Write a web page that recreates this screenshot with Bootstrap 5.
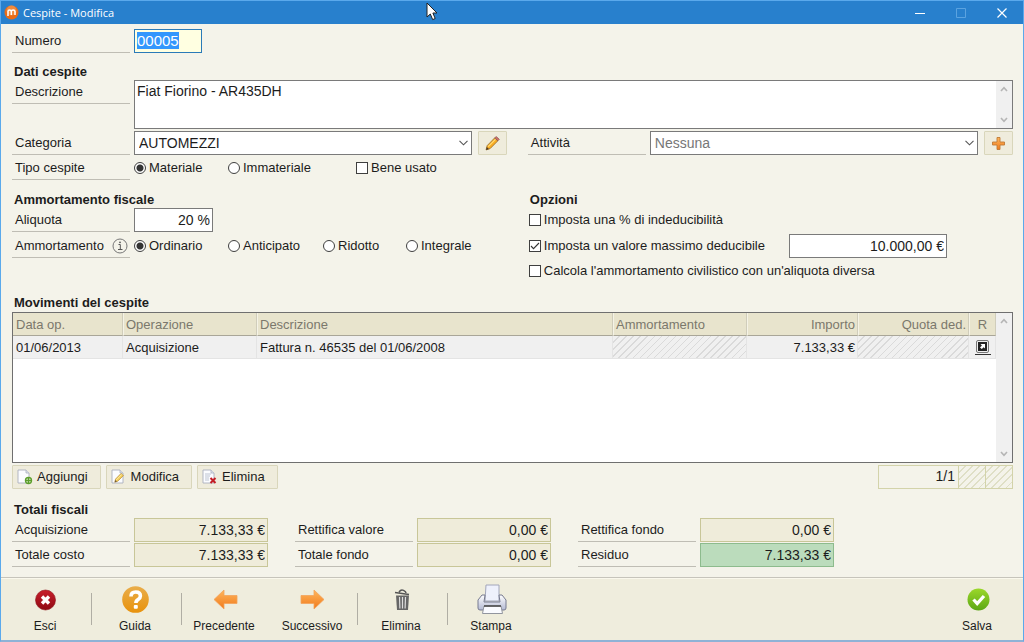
<!DOCTYPE html>
<html lang="it">
<head>
<meta charset="utf-8">
<meta name="viewport" content="width=device-width, initial-scale=1">
<title>Cespite - Modifica</title>
<link rel="stylesheet" href="https://cdn.jsdelivr.net/npm/bootstrap@5.3.0/dist/css/bootstrap.min.css">
<style>
body{font:13px/16px "Liberation Sans",Arial,sans-serif;color:#1c1c1c;background:#f4f3ea}
.window{min-height:100vh;border:1px solid #5aa9ec;border-bottom:2px solid #8fb2d6}
.titlebar{height:23px;background:#2880cd;color:#fff;font:11px/23px "Open Sans","Noto Sans",sans-serif;padding:0 1px 0 3px}
.titlebar button{width:41px;height:23px;border:0;padding:0;background:none;display:flex;align-items:center;justify-content:center}
.pointer{position:absolute;left:42%;top:1px;margin-left:-4px}
.content{padding:5px 10px 10px 11px}
h2{font-size:13px;line-height:16px;font-weight:700;margin:0;padding-left:2px}
h2.sec-tight{margin-top:11px}
.sec{margin-top:12px}
h2.sec-wide{margin-top:13px}
.gap-one{margin-top:1px}
.gap-two{margin-top:2px}
.pair{display:grid;grid-template-columns:102fr 100fr;column-gap:21px}
.line{display:flex;align-items:center;min-height:24px}
.cap{width:118px;height:24px;flex:none;margin-right:4px;padding:4px 2px 0 3px;border-bottom:1px solid #bfbdb4;line-height:16px;display:flex;justify-content:space-between}
.field.form-control,.field.form-select{height:24px;min-height:24px;border:1px solid #7a7a7a;border-radius:0;background-color:#fff;color:#1c1c1c;font-size:14px;line-height:20px;padding:0 2px 1px;box-shadow:none}
.field.form-select{padding:0 24px 1px 4px;background-image:url("data:image/svg+xml,%3Csvg xmlns='http://www.w3.org/2000/svg' viewBox='0 0 9 6'%3E%3Cpath d='M.5.8l4 4 4-4' fill='none' stroke='%23555' stroke-width='1.1'/%3E%3C/svg%3E");background-size:9px 6px;background-position:right 3px center}
.field.form-select.muted-choice{color:#777}
.field.number.form-control{width:68px;background-color:#ffffe1;border-color:#2a7ab8;font-size:15px}
.number::selection{background:#3297fd;color:#fff}
.w-rate{width:79px!important}.w-limit{width:158px!important}
.money{text-align:right}
.memo{height:49px;border:1px solid #7a7a7a;background:#fff}
.memo textarea{border:0;outline:0;resize:none;overflow:hidden;font-size:14px;line-height:16px;padding:2px;background:none;color:inherit}
.scroller{width:16px;flex:none;background:#f0f0f0;display:flex;flex-direction:column;justify-content:space-between;align-items:center;padding:5px 0 5px}
.tool{height:24px;border:1px solid #d9d6bb;background:#efecdc;border-radius:1px;padding:0 12px 0 4px;color:#1c1c1c;display:flex;align-items:center;gap:4px;font-size:13px;line-height:16px}
.tool.square{width:29px;flex:none;justify-content:center;margin-left:6px;padding:0}
.toolrow{gap:5px}
.tick{display:flex;align-items:center;height:24px;white-space:nowrap}
.tick .form-check-input{width:12px;height:12px;margin:0 3px 0 0;border:1px solid #3f3f3f;background-color:#fff;flex:none;box-shadow:none}
.tick .form-check-input[type=checkbox]{border-radius:0}
.tick .form-check-input:checked[type=radio]{background-image:radial-gradient(circle,#333 0 3px,transparent 4px)}
.tick .form-check-input:checked[type=checkbox]{background-image:url("data:image/svg+xml,%3Csvg xmlns='http://www.w3.org/2000/svg' viewBox='0 0 10 10'%3E%3Cpath d='M1 5l2.5 2.6L9 2' fill='none' stroke='%23333' stroke-width='1.1'/%3E%3C/svg%3E");background-size:10px}
.options{padding-left:1px}
.options h2{padding-left:1px}
.r1{width:94px}.r2{width:95px}.r3{width:83px}.r4{width:128px}
.hatch{background:repeating-linear-gradient(135deg,transparent 0 4px,#dadada 4px 5px)}
.grid-box{border:1px solid #6f6f6f;background:#fff;min-height:151px}
.moves{width:100%;table-layout:fixed;border-collapse:separate;border-spacing:0}
.moves th{height:23px;background:#e8e4cd;color:#7b786c;font-weight:400;padding:1px 2px 0;border-right:1px solid #d0cdbb;border-bottom:1px solid #a9a698;border-left:1px solid #f5f3e6}
.moves td{height:23px;padding:1px 2px 0 3px;background-color:#f0f0f0;border-right:1px solid #e4e4e4;border-bottom:1px solid #e4e4e4}
.moves th:first-child{border-left:0;padding-left:3px}
.open-link{display:block;width:16px;border-bottom:1px solid #333;padding-bottom:1px;margin:auto;text-align:center;line-height:0}
.pager{border:1px solid #d3d3aa;height:24px;font-size:14px}
.pager .count{width:79px;text-align:right;padding:2px 3px}
.pager .hatch{width:27px;border-left:1px solid #d3d3aa;background:repeating-linear-gradient(135deg,transparent 0 4px,#dfdfc6 4px 5px)}
.totals{display:grid;grid-template-columns:repeat(3,256px);column-gap:27px;row-gap:1px}
.totals .field.form-control{background-color:#efecda;border-color:#c8c698;width:134px}
.totals .field.form-control.result{background-color:#bbdcbc;border-color:#8dbb8d}
.actions{min-height:63px;border-top:1px solid #c6c4bb;background:#efeddd;box-shadow:inset 0 1px #faf8ec}
.action{width:90px;height:62px;padding:6px 2px 0 0;border:0;background:none;color:#1c1c1c;font-size:12px;line-height:16px;display:flex;flex-direction:column;align-items:center;gap:2px}
.action svg{height:32px}
.near{width:88px}
.bar{width:1px;height:32px;margin-top:15px;background:#b0aea4;margin-right:-1px}
</style>
</head>
<body>
<svg width="0" height="0" class="position-absolute" aria-hidden="true">
<defs>
<linearGradient id="orange" x1="0" y1="0" x2="0" y2="1"><stop offset="0" stop-color="#ffb65c"/><stop offset="1" stop-color="#f07a1c"/></linearGradient>
<linearGradient id="amber" x1="0" y1="0" x2="0" y2="1"><stop offset="0" stop-color="#e9ad4a"/><stop offset="1" stop-color="#e8920c"/></linearGradient>
<linearGradient id="green" x1="0" y1="0" x2="0" y2="1"><stop offset="0" stop-color="#9bd82a"/><stop offset="1" stop-color="#5ca716"/></linearGradient>
<linearGradient id="red" x1="0" y1="0" x2="0" y2="1"><stop offset="0" stop-color="#c81f2b"/><stop offset="1" stop-color="#8f0a14"/></linearGradient>
<linearGradient id="steel" x1="0" y1="0" x2="0" y2="1"><stop offset="0" stop-color="#fff"/><stop offset="1" stop-color="#b3b9d3"/></linearGradient>
<symbol id="up" viewBox="0 0 8 6"><path d="M1 5l3-3.4L7 5" fill="none" stroke="#b5b5b5" stroke-width="1.6"/></symbol>
<symbol id="down" viewBox="0 0 8 6"><path d="M1 1l3 3.4L7 1" fill="none" stroke="#b5b5b5" stroke-width="1.6"/></symbol>
<symbol id="pencil" viewBox="0 0 14 14"><path d="M1 13l1-4 7-7.2 3 2.700-7.300 7.300z" fill="#f9ac22" stroke="#99702c" stroke-width=".8"/><path d="M3 10l7-7" stroke="#ffdf7b" stroke-width="1"/><path d="M9 1.800l1.500-1.300 2.900 2.600-1.400 1.400z" fill="#cf7069" stroke="#86534f" stroke-width=".6"/><path d="M1 13l.7-2.800 2 1.900z" fill="#4b3928"/></symbol>
<symbol id="pencil-light" viewBox="0 0 14 14"><path d="M1 13l1-4 7-7.200 3 2.700-7.300 7.300z" fill="#f3cd5a" stroke="#b58a35" stroke-width=".9"/><path d="M3 10l7-7" stroke="#fff0a8" stroke-width="1.200"/><path d="M1 13l.7-2.800 2 1.900z" fill="#6b5a3a"/></symbol>
<symbol id="sheet" viewBox="0 0 15 15"><path d="M1 1h8l3 3v10H1z" fill="#fbfcff" stroke="#aab0bd" stroke-width=".9"/><path d="M9 1v3h3" fill="#dfe5ef" stroke="#aab0bd" stroke-width=".8"/></symbol>
</defs>
</svg>

<div class="window d-flex flex-column">
  <header class="titlebar d-flex align-items-center position-relative">
    <svg width="15" height="15" viewBox="0 0 15 15" class="me-1"><circle cx="7.500" cy="7.500" r="7" fill="#e96b16"/><circle cx="7.500" cy="5.500" r="5" fill="#f4a05c" opacity=".6"/><path d="M4 11V6.500q0-1.500 1.500-1.500T7.300 6.500V10M7.300 6.500Q7.500 5 9.200 5T11 6.600V10" fill="none" stroke="#fff" stroke-width="1.500"/></svg>
    <span>Cespite - Modifica</span>
    <svg class="pointer" width="13" height="20" viewBox="0 0 13 20"><path d="M1 1v14l3.300-3 2.400 5.600 2.500-1.100L6.900 11H11z" fill="#fff" stroke="#222"/></svg>
    <div class="d-flex ms-auto">
      <button type="button" aria-label="Riduci"><svg width="10" height="10"><path d="M0 5.500h10" stroke="#fff"/></svg></button>
      <button type="button" aria-label="Ingrandisci" disabled><svg width="10" height="10"><path d="M.5.5h9v9h-9z" fill="none" stroke="#5ba3e0"/></svg></button>
      <button type="button" aria-label="Chiudi"><svg width="10" height="10"><path d="M.5.5l9 9M9.500.5l-9 9" stroke="#fff" stroke-width="1.200"/></svg></button>
    </div>
  </header>

  <main class="content flex-grow-1 d-flex flex-column">
    <div class="line"><label class="cap" for="numero">Numero</label><input id="numero" class="form-control field number" value="00005"></div>

    <h2 class="sec-tight">Dati cespite</h2>
    <div class="d-flex">
      <label class="cap" for="descr">Descrizione</label>
      <div class="memo d-flex flex-grow-1"><textarea id="descr" class="flex-grow-1">Fiat Fiorino - AR435DH</textarea>
        <div class="scroller"><svg width="8" height="6"><use href="#up"/></svg><svg width="8" height="6"><use href="#down"/></svg></div></div>
    </div>
    <div class="pair gap-two">
      <div class="line"><label class="cap" for="cat">Categoria</label><select id="cat" class="form-select field"><option>AUTOMEZZI</option></select><button type="button" class="tool square" aria-label="Modifica categoria"><svg width="15" height="15"><use href="#pencil"/></svg></button></div>
      <div class="line"><label class="cap" for="att">Attività</label><select id="att" class="form-select field muted-choice"><option>Nessuna</option></select><button type="button" class="tool square" aria-label="Aggiungi attività"><svg width="13" height="13" viewBox="0 0 13 13"><path d="M5 .5h3V5h4.500v3H8v4.500H5V8H.5V5H5z" fill="url(#orange)" stroke="#c07a35" stroke-width=".9"/></svg></button></div>
    </div>
    <div class="line gap-one" role="radiogroup" aria-label="Tipo cespite"><span class="cap">Tipo cespite</span>
      <label class="tick r1"><input class="form-check-input" type="radio" name="tipo" checked>Materiale</label>
      <label class="tick r4"><input class="form-check-input" type="radio" name="tipo">Immateriale</label>
      <label class="tick"><input class="form-check-input" type="checkbox">Bene usato</label>
    </div>

    <div class="pair sec">
      <section>
        <h2>Ammortamento fiscale</h2>
        <div class="line"><label class="cap" for="aliq">Aliquota</label><input id="aliq" class="form-control field money w-rate" value="20 %"></div>
        <div class="line gap-two" role="radiogroup" aria-label="Ammortamento"><span class="cap">Ammortamento
          <svg width="16" height="16" viewBox="0 0 16 16"><circle cx="8" cy="8" r="7" fill="none" stroke="#777"/><path d="M6.500 6.500H8.300v5M6 11.500h4.500" fill="none" stroke="#555"/><circle cx="8" cy="4.300" r=".9" fill="#555"/></svg></span>
          <label class="tick r1"><input class="form-check-input" type="radio" name="amm" checked>Ordinario</label>
          <label class="tick r2"><input class="form-check-input" type="radio" name="amm">Anticipato</label>
          <label class="tick r3"><input class="form-check-input" type="radio" name="amm">Ridotto</label>
          <label class="tick"><input class="form-check-input" type="radio" name="amm">Integrale</label>
        </div>
      </section>
      <section class="options">
        <h2>Opzioni</h2>
        <label class="tick"><input class="form-check-input" type="checkbox">Imposta una % di indeducibilità</label>
        <div class="line gap-two"><label class="tick me-4"><input class="form-check-input" type="checkbox" checked>Imposta un valore massimo deducibile</label><input class="form-control field money w-limit" aria-label="Valore massimo deducibile" value="10.000,00 €"></div>
        <label class="tick gap-one">
          <input class="form-check-input" type="checkbox">Calcola l'ammortamento civilistico con un'aliquota diversa</label>
      </section>
    </div>

    <h2 class="sec">Movimenti del cespite</h2>
    <div class="grid-box d-flex flex-grow-1 gap-one">
      <div class="flex-grow-1">
        <table class="moves">
          <colgroup><col style="width:110px"><col style="width:134px"><col><col style="width:134px"><col style="width:111px"><col style="width:111px"><col style="width:27px"></colgroup>
          <thead><tr><th>Data op.</th><th>Operazione</th><th>Descrizione</th><th>Ammortamento</th><th class="text-end">Importo</th><th class="text-end">Quota ded.</th><th class="text-center">R</th></tr></thead>
          <tbody><tr><td>01/06/2013</td><td>Acquisizione</td><td>Fattura n. 46535 del 01/06/2008</td><td class="hatch"></td><td class="text-end">7.133,33 €</td><td class="hatch"></td>
            <td><a href="#" class="open-link" aria-label="Apri registrazione"><svg width="13" height="13" viewBox="0 0 13 13"><rect x=".5" y=".5" width="12" height="12" rx="1.500" fill="#eee" stroke="#777"/><rect x="2" y="2" width="9" height="9" fill="#222"/><path d="M4.500 4H9v4.500L7.700 7.200 5.800 9 4 7.400l1.900-1.900z" fill="#fff"/></svg></a></td></tr></tbody>
        </table>
      </div>
      <div class="scroller"><svg width="8" height="6"><use href="#up"/></svg><svg width="8" height="6"><use href="#down"/></svg></div>
    </div>
    <div class="d-flex gap-two">
      <div class="d-flex toolrow">
        <button type="button" class="tool"><svg width="16" height="16" viewBox="0 0 16 16"><use href="#sheet" width="15" height="15"/><circle cx="11.500" cy="11.500" r="3" fill="#fff" stroke="#5c9e2b" stroke-width="1.400"/><path d="M11.500 9v5M9 11.500h5" stroke="#5c9e2b" stroke-width="1.600"/></svg>Aggiungi</button>
        <button type="button" class="tool"><svg width="16" height="16" viewBox="0 0 16 16"><use href="#sheet" width="15" height="15"/><use href="#pencil-light" x="3" y="3" width="11" height="11"/></svg>Modifica</button>
        <button type="button" class="tool"><svg width="16" height="16" viewBox="0 0 16 16"><use href="#sheet" width="15" height="15"/><path d="M3 5h6M3 7h5M3 9h4M3 11h4" stroke="#aeb6c6" stroke-width=".8"/><path d="M8.500 9l5 5M13.500 9l-5 5" stroke="#c41e25" stroke-width="2"/></svg>Elimina</button>
      </div>
      <div class="pager d-flex ms-auto"><div class="count">1/1</div><div class="hatch"></div><div class="hatch"></div></div>
    </div>

    <h2 class="sec-wide">Totali fiscali</h2>
    <div class="totals">
      <div class="line"><label class="cap" for="t1">Acquisizione</label><input id="t1" class="form-control field money" readonly value="7.133,33 €"></div>
      <div class="line"><label class="cap" for="t2">Rettifica valore</label><input id="t2" class="form-control field money" readonly value="0,00 €"></div>
      <div class="line"><label class="cap" for="t3">Rettifica fondo</label><input id="t3" class="form-control field money" readonly value="0,00 €"></div>
      <div class="line"><label class="cap" for="t4">Totale costo</label><input id="t4" class="form-control field money" readonly value="7.133,33 €"></div>
      <div class="line"><label class="cap" for="t5">Totale fondo</label><input id="t5" class="form-control field money" readonly value="0,00 €"></div>
      <div class="line"><label class="cap" for="t6">Residuo</label><input id="t6" class="form-control field money result" readonly value="7.133,33 €"></div>
    </div>
  </main>

  <footer class="actions d-flex">
    <button type="button" class="action"><svg width="32" viewBox="0 0 32 32"><circle cx="16.500" cy="16" r="10" fill="url(#red)" stroke="#8b0f18" stroke-width=".6"/><path d="M13 12.500l7 7M20 12.500l-7 7" stroke="#fff" stroke-width="3.400"/></svg>Esci</button>
    <span class="bar"></span>
    <button type="button" class="action"><svg width="32" viewBox="0 0 32 32"><circle cx="16.500" cy="15.500" r="13.300" fill="url(#amber)"/><path d="M12 12.500q0-4.500 4.700-4.500t4.700 4q0 2-2.300 3.500T16.900 19" fill="none" stroke="#fff" stroke-width="3.600"/><rect x="14.800" y="21" width="4" height="3.800" rx="1" fill="#fff"/></svg>Guida</button>
    <span class="bar"></span>
    <button type="button" class="action near"><svg width="32" viewBox="0 0 32 32"><path d="M6 15.500l10-9.500v5.500h13v8H16V25z" fill="url(#orange)" stroke="#f2a35c" stroke-width=".8"/></svg>Precedente</button>
    <button type="button" class="action near"><svg width="32" viewBox="0 0 32 32"><path d="M28 15.500l-10-9.500v5.500H5v8h13V25z" fill="url(#orange)" stroke="#f2a35c" stroke-width=".8"/></svg>Successivo</button>
    <span class="bar"></span>
    <button type="button" class="action"><svg width="32" viewBox="0 0 32 32"><path d="M11 11.500h13L23 26H12z" fill="#666"/><path d="M14.500 13l.4 11.500M17.500 13v11.500M20.500 13l-.4 11.500" stroke="#ddd" stroke-width="1.200"/><path d="M10 8.500l14 2M14 8q2-3 4.500-1.700t2.500 2.700" fill="none" stroke="#555" stroke-width="1.500"/></svg>Elimina</button>
    <span class="bar"></span>
    <button type="button" class="action"><svg width="32" viewBox="0 0 32 32"><path d="M11 1h13v16H10z" fill="#eef1fc" stroke="#a2a6ba"/><path d="M7 11h3l-1 7h16l-1-7h3l4 5v8q0 2-2 2H5q-2 0-2-2v-8z" fill="url(#steel)" stroke="#777b90"/><path d="M9 22h17l1.500 7.500h-20z" fill="#fafbff" stroke="#92969f"/><path d="M9 22h17" stroke="#444" stroke-width="1.500"/></svg>Stampa</button>
    <button type="button" class="action ms-auto"><svg width="32" viewBox="0 0 32 32"><circle cx="17.500" cy="15.500" r="11" fill="url(#green)"/><path d="M12.500 15.500l3.700 4 6.800-7.500" fill="none" stroke="#fff" stroke-width="3.300"/></svg>Salva</button>
  </footer>
</div>
<script src="https://cdn.jsdelivr.net/npm/bootstrap@5.3.0/dist/js/bootstrap.bundle.min.js"></script>
<script>
const numero = document.getElementById('numero');
numero.focus();
numero.select();
</script>
</body>
</html>
